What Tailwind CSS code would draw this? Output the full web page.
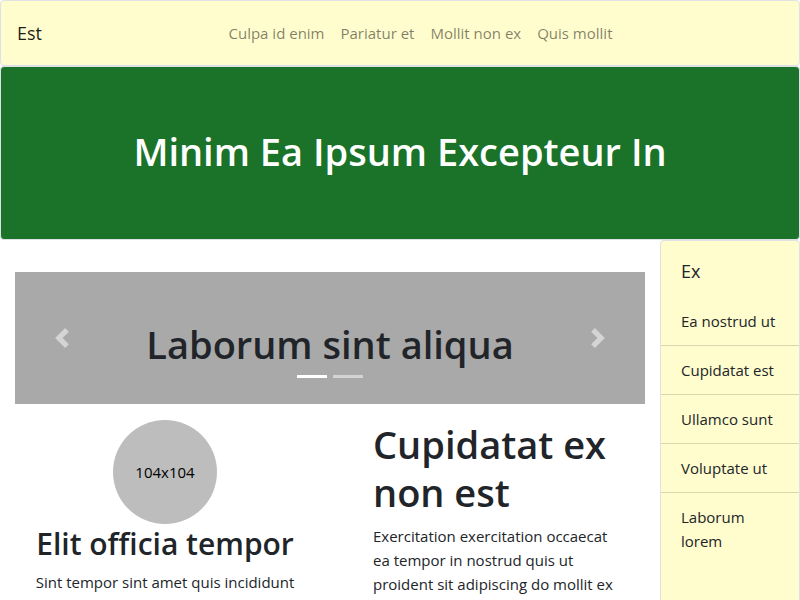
<!DOCTYPE html>
<html lang="la">
<head>
<meta charset="utf-8">
<meta name="viewport" content="width=device-width, initial-scale=1">
<title>Est</title>
<script src="https://cdn.jsdelivr.net/npm/@tailwindcss/browser@4"></script>
</head>
<body class="flex min-h-screen flex-col bg-white font-['Open_Sans','Noto_Sans',sans-serif] text-[15px] leading-6 text-[#212529]">
<nav class="flex items-center rounded border border-[#dee2e6] bg-[#fffccd] px-4 py-3">
  <a href="#" class="mr-4 text-lg text-black/90">Est</a>
  <ul class="mx-auto flex py-2 text-black/50">
    <li><a href="#" class="block px-2">Culpa id enim</a></li>
    <li><a href="#" class="block px-2">Pariatur et</a></li>
    <li><a href="#" class="block px-2">Mollit non ex</a></li>
    <li><a href="#" class="block px-2">Quis mollit</a></li>
  </ul>
</nav>
<header class="rounded border border-[#dee2e6] bg-[#1a7329] px-8 pt-15 pb-16 text-center text-white">
  <h1 class="text-[38px] leading-12 font-semibold">Minim Ea Ipsum Excepteur In</h1>
</header>
<div class="flex grow">
  <main class="min-w-0 flex-1 px-[15px] pt-8">
    <section class="relative bg-[#a9a9a9] px-20 pt-12 pb-9 text-center" aria-label="Carousel">
      <h2 class="text-[38px] leading-12 font-semibold">Laborum sint aliqua</h2>
      <button type="button" aria-label="Previous" class="absolute inset-y-0 left-0 flex w-[15%] items-center justify-center opacity-50">
        <svg class="size-5" viewBox="0 0 8 8" fill="#fff"><path d="M5.25 0l-4 4 4 4 1.5-1.5L4.25 4l2.5-2.5L5.25 0z"/></svg>
      </button>
      <button type="button" aria-label="Next" class="absolute inset-y-0 right-0 flex w-[15%] items-center justify-center opacity-50">
        <svg class="size-5" viewBox="0 0 8 8" fill="#fff"><path d="M2.75 0l-1.5 1.5L3.75 4l-2.5 2.5L2.75 8l4-4-4-4z"/></svg>
      </button>
      <div class="absolute inset-x-0 bottom-[26px] flex justify-center gap-[6px]">
        <button type="button" aria-label="Slide 1" class="h-[3px] w-[30px] bg-white"></button>
        <button type="button" aria-label="Slide 2" class="h-[3px] w-[30px] bg-white/50"></button>
      </div>
    </section>
    <div class="grid grid-cols-2 gap-[30px] pt-4">
      <section class="text-center">
        <div class="mx-auto flex size-[104px] items-center justify-center rounded-full bg-[#bdbdbd] text-black">104x104</div>
        <h2 class="mt-[2px] mb-2 text-[30px] leading-9 font-semibold">Elit officia tempor</h2>
        <p>Sint tempor sint amet quis incididunt</p>
      </section>
      <section class="px-7">
        <h2 class="mb-2 text-[38px] leading-12 font-semibold">Cupidatat ex non est</h2>
        <p>Exercitation exercitation occaecat ea tempor in nostrud quis ut proident sit adipiscing do mollit ex</p>
      </section>
    </div>
  </main>
  <aside class="w-[140px] rounded-t border border-b-0 border-[#dee2e6] bg-[#fffccd]">
    <h2 class="px-5 pt-[18px] pb-[14px] text-lg leading-6">Ex</h2>
    <ul class="divide-y divide-black/15">
      <li><a href="#" class="block px-5 py-3">Ea nostrud ut</a></li>
      <li><a href="#" class="block px-5 py-3">Cupidatat est</a></li>
      <li><a href="#" class="block px-5 py-3">Ullamco sunt</a></li>
      <li><a href="#" class="block px-5 py-3">Voluptate ut</a></li>
      <li><a href="#" class="block px-5 py-3">Laborum lorem</a></li>
    </ul>
  </aside>
</div>
</body>
</html>
